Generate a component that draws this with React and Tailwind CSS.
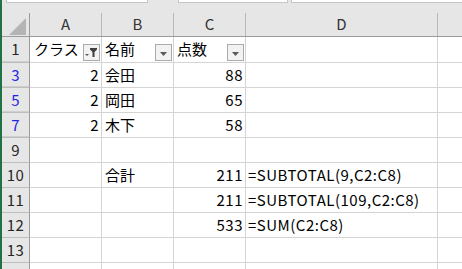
import React from "react";

const FONT = { fontFamily: '"Noto Sans CJK JP", "Noto Sans", sans-serif' };

const rows = [
  { n: "1", a: "クラス", b: "名前", c: "点数", d: "", head: true, hid: true },
  { n: "3", a: "2", b: "会田", c: "88", blue: true, hid: true },
  { n: "5", a: "2", b: "岡田", c: "65", blue: true, hid: true },
  { n: "7", a: "2", b: "木下", c: "58", blue: true, hid: true },
  { n: "9" },
  { n: "10", b: "合計", c: "211", d: "=SUBTOTAL(9,C2:C8)" },
  { n: "11", c: "211", d: "=SUBTOTAL(109,C2:C8)" },
  { n: "12", c: "533", d: "=SUM(C2:C8)" },
  { n: "13" },
  { n: "" },
];

function Arrow() {
  return (
    <svg width="7" height="4" viewBox="0 0 7 4">
      <path d="M0 0 H7 L3.5 4 Z" fill="#5a5a5a" />
    </svg>
  );
}

function FilterBtn({ active }) {
  return (
    <div className="w-[17px] h-[17px] mb-[1px] mr-[1px] border border-[#ababab] bg-[#f2f2f2] flex items-center justify-center shrink-0">
      {active ? (
        <svg width="13" height="11" viewBox="0 0 13 11">
          <path d="M0 7 H4 L2 9 Z" fill="#5a5a5a" />
          <path d="M5 1 H12 V2.5 L9.5 5 V10 H7.5 V5 L5 2.5 Z" fill="#3f3f3f" />
        </svg>
      ) : (
        <div className="mt-[2px]">
          <Arrow />
        </div>
      )}
    </div>
  );
}

export default function App() {
  return (
    <div
      className="w-[462px] h-[269px] bg-[#e6e6e6] overflow-hidden flex text-[15px] text-black"
      style={FONT}
    >
      <div className="w-[2px] bg-[#217346] shrink-0" />
      <div className="flex-1 flex flex-col">
        {/* top strip */}
        <div className="h-[13px] flex shrink-0">
          <div className="ml-[4px] w-[142px] h-[3px] bg-white border-x border-b border-[#c6c6c6]" />
          <div className="ml-[30px] w-[110px] h-[3px] bg-white border-x border-b border-[#c6c6c6]" />
          <div className="ml-[3px] flex-1 h-[3px] bg-white border-l border-b border-[#c6c6c6]" />
        </div>
        {/* column header */}
        <div className="h-[24px] flex border-b border-[#9b9b9b] shrink-0 text-[#333333]">
          <div className="w-[28px] border-r border-[#9b9b9b] relative">
            <svg className="absolute left-[7px] top-[5px]" width="17" height="17" viewBox="0 0 17 17">
              <path d="M17 0 V17 H0 Z" fill="#b4b4b4" />
            </svg>
          </div>
          {[
            ["A", "w-[72px]"],
            ["B", "w-[72px]"],
            ["C", "w-[72px]"],
            ["D", "w-[192px]"],
          ].map(([l, w]) => (
            <div key={l} className={`${w} border-r border-[#b8b8b8] flex items-center justify-center`}>
              {l}
            </div>
          ))}
          <div className="flex-1" />
        </div>
        {/* rows */}
        {rows.map((r, i) => (
          <div key={i} className={`${r.head ? "h-[26px]" : "h-[25px]"} flex shrink-0`}>
            <div
              className={`w-[28px] border-r border-r-[#9b9b9b] border-b border-b-[#bdbdbd] flex items-center justify-center tracking-[0.3px] ${
                r.blue ? "text-[#2323e8]" : "text-[#262626]"
              } ${r.hid ? "shadow-[inset_0_-1px_0_#cfcfcf]" : ""}`}
            >
              {r.n}
            </div>
            <div className="w-[72px] bg-white border-r border-b border-[#d4d4d4] flex items-center">
              {r.head ? (
                <>
                  <span className="flex-1 pl-[4px]">{r.a}</span>
                  <div className="self-end">
                    <FilterBtn active />
                  </div>
                </>
              ) : (
                <span className="flex-1 text-right pr-[2px] tracking-[0.5px]">{r.a}</span>
              )}
            </div>
            <div className="w-[72px] bg-white border-r border-b border-[#d4d4d4] flex items-center">
              <span className="flex-1 pl-[3px]">{r.b}</span>
              {r.head && (
                <div className="self-end">
                  <FilterBtn />
                </div>
              )}
            </div>
            <div className="w-[72px] bg-white border-r border-b border-[#d4d4d4] flex items-center">
              {r.head ? (
                <>
                  <span className="flex-1 pl-[3px]">{r.c}</span>
                  <div className="self-end">
                    <FilterBtn />
                  </div>
                </>
              ) : (
                <span className="flex-1 text-right pr-[2px] tracking-[0.5px]">{r.c}</span>
              )}
            </div>
            <div className="w-[192px] bg-white border-r border-b border-[#d4d4d4] flex items-center">
              <span className="pl-[2px] whitespace-nowrap tracking-[0.5px]">{r.d}</span>
            </div>
            <div className="flex-1 bg-white border-b border-[#d4d4d4]" />
          </div>
        ))}
      </div>
    </div>
  );
}
